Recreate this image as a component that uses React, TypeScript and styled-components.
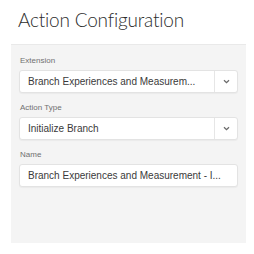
import * as React from 'react';
import styled, { createGlobalStyle } from 'styled-components';

const GlobalStyle = createGlobalStyle`
  html, body {
    margin: 0;
    padding: 0;
    background: #ffffff;
  }
  body {
    width: 254px;
    height: 254px;
    overflow: hidden;
  }
`;

const Page = styled.div`
  display: flex;
  flex-direction: column;
  padding: 7px 8px 0 11px;
`;

const Title = styled.h1`
  margin: 0 0 0 7px;
  height: 37px;
  font-family: Lato, 'Open Sans', sans-serif;
  font-weight: 300;
  font-size: 19px;
  line-height: 26px;
  color: #2c2c2c;
  letter-spacing: -0.2px;
`;

const Panel = styled.div`
  display: flex;
  flex-direction: column;
  gap: 8px;
  height: 199px;
  box-sizing: border-box;
  padding: 9px 8px 0 8px;
  background: #f4f4f4;
  border-top: 1px solid #e9e9e9;
`;

const Field = styled.div`
  display: flex;
  flex-direction: column;
  gap: 3px;
`;

const Label = styled.label`
  font-family: 'Liberation Sans', Arial, sans-serif;
  font-size: 8px;
  line-height: 13px;
  color: #707070;
  padding-left: 1px;
`;

const Box = styled.div`
  display: flex;
  align-items: stretch;
  height: 23px;
  box-sizing: border-box;
  background: #ffffff;
  border: 1px solid #e3e3e3;
  border-radius: 3px;
  box-shadow: 0 1px 1px rgba(0, 0, 0, 0.04);
`;

const Value = styled.div`
  flex: 1;
  min-width: 0;
  padding: 0 8px;
  font-family: 'Liberation Sans', Arial, sans-serif;
  font-size: 10px;
  line-height: 21px;
  color: #3a3a3a;
  white-space: nowrap;
`;

const Toggle = styled.div`
  width: 22px;
  flex: none;
  display: flex;
  align-items: center;
  justify-content: center;
  border-left: 1px solid #e6e6e6;
`;

const Chevron = () => (
  <svg width="7" height="5" viewBox="0 0 7 5">
    <path d="M1 1.2 L3.5 3.6 L6 1.2" fill="none" stroke="#6a6a6a" strokeWidth="1.3" />
  </svg>
);

const Select: React.FC<{ value: string }> = ({ value }) => (
  <Box>
    <Value>{value}</Value>
    <Toggle>
      <Chevron />
    </Toggle>
  </Box>
);

export default function App() {
  return (
    <>
      <GlobalStyle />
      <Page>
        <Title>Action Configuration</Title>
        <Panel>
          <Field>
            <Label>Extension</Label>
            <Select value="Branch Experiences and Measurem..." />
          </Field>
          <Field>
            <Label>Action Type</Label>
            <Select value="Initialize Branch" />
          </Field>
          <Field>
            <Label>Name</Label>
            <Box>
              <Value>Branch Experiences and Measurement - I...</Value>
            </Box>
          </Field>
        </Panel>
      </Page>
    </>
  );
}
